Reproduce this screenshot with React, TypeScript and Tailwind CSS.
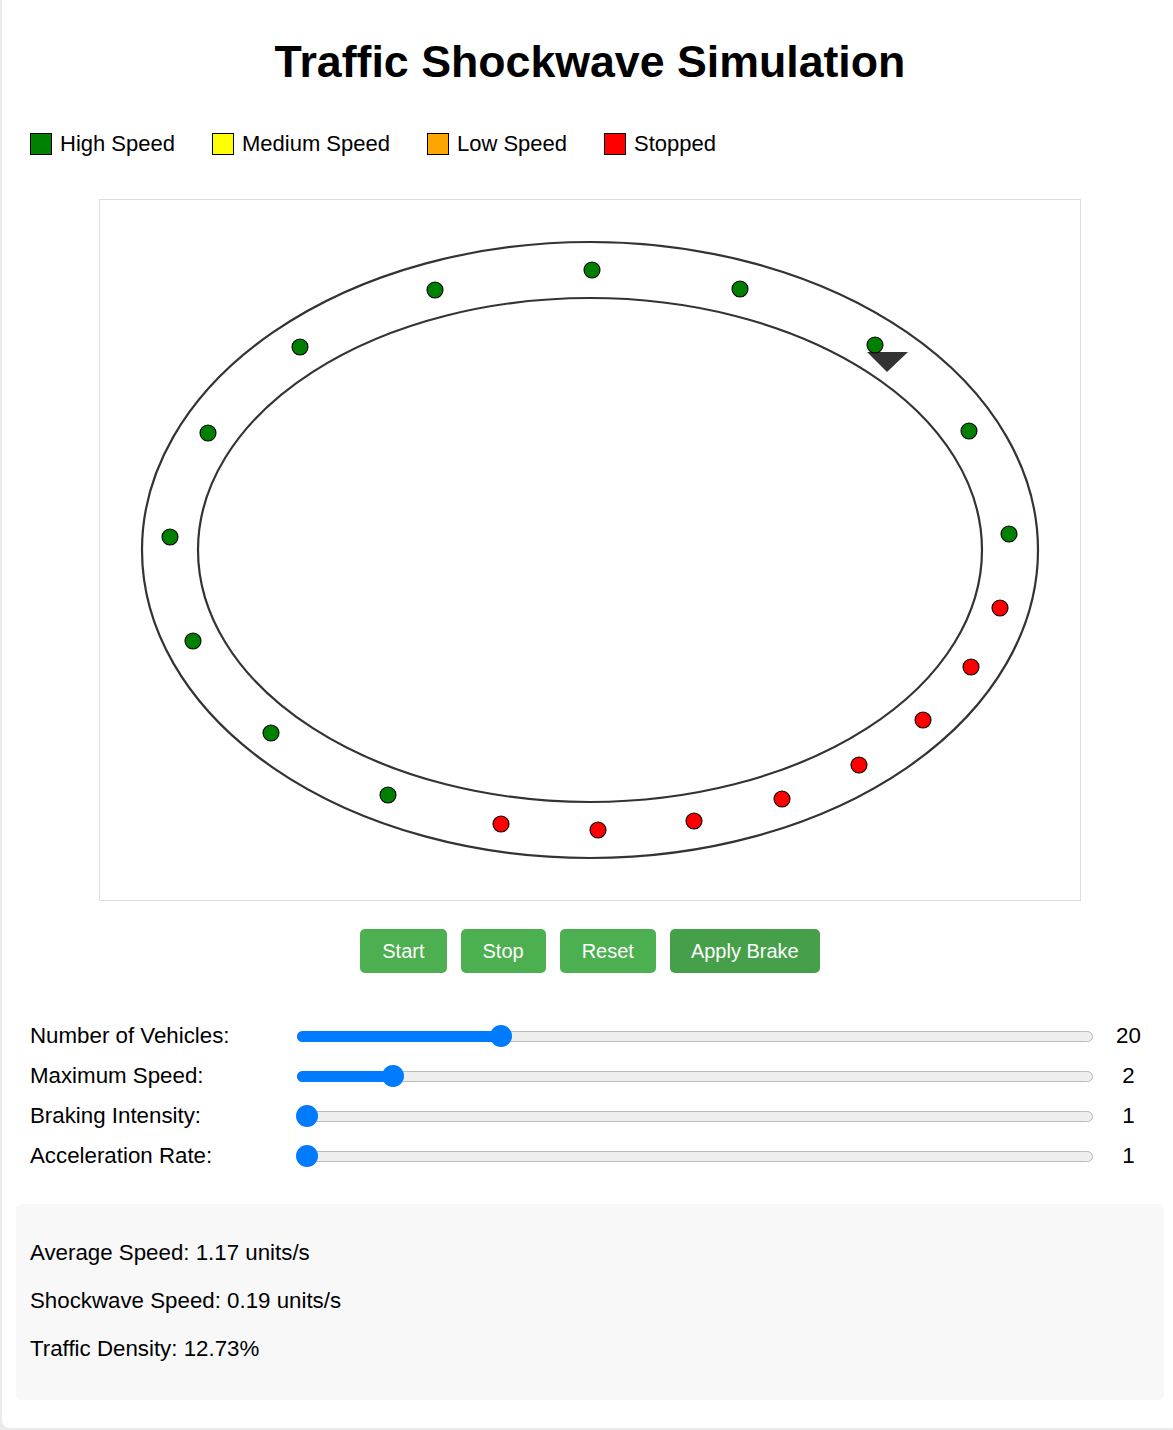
import React from 'react';

type Car = { x: number; y: number; stopped?: boolean };

const cars: Car[] = [
  { x: 492, y: 70 },
  { x: 640, y: 89 },
  { x: 775, y: 145 },
  { x: 869, y: 231 },
  { x: 909, y: 334 },
  { x: 900, y: 408, stopped: true },
  { x: 871, y: 467, stopped: true },
  { x: 823, y: 520, stopped: true },
  { x: 759, y: 565, stopped: true },
  { x: 682, y: 599, stopped: true },
  { x: 594, y: 621, stopped: true },
  { x: 498, y: 630, stopped: true },
  { x: 401, y: 624, stopped: true },
  { x: 288, y: 595 },
  { x: 171, y: 533 },
  { x: 93, y: 441 },
  { x: 70, y: 337 },
  { x: 108, y: 233 },
  { x: 200, y: 147 },
  { x: 335, y: 90 },
];

const legend = [
  { label: 'High Speed', color: 'bg-[#008000]' },
  { label: 'Medium Speed', color: 'bg-[#ffff00]' },
  { label: 'Low Speed', color: 'bg-[#ffa500]' },
  { label: 'Stopped', color: 'bg-[#ff0000]' },
];

const sliders = [
  { label: 'Number of Vehicles:', value: 20, min: 10, max: 50 },
  { label: 'Maximum Speed:', value: 2, min: 1, max: 10 },
  { label: 'Braking Intensity:', value: 1, min: 1, max: 10 },
  { label: 'Acceleration Rate:', value: 1, min: 1, max: 10 },
];

function Slider({ value, min, max }: { value: number; min: number; max: number }) {
  // thumb centre travels from 10px to (width - 10px)
  const pct = (value - min) / (max - min);
  const pos = `calc(10px + ${pct} * (100% - 20px))`;
  return (
    <div className="relative flex-1 h-[22px] flex items-center">
      <div className="w-full h-[11px] rounded-full bg-[#eeeeee] border border-[#bbbbbb]" />
      <div className="absolute left-0 h-[11px] rounded-l-full bg-[#007bff]" style={{ width: pos }} />
      <div
        className="absolute top-0 w-[22px] h-[22px] rounded-full bg-[#007bff] -translate-x-1/2"
        style={{ left: pos }}
      />
    </div>
  );
}

export default function App() {
  return (
    <div className="w-[1173px] h-[1430px] overflow-hidden bg-[#ebebeb] font-['Liberation_Sans',Arial,sans-serif] text-black">
      <div className="ml-[2px] w-[1176px] bg-white rounded-b-[8px] px-[14px] pt-[37px] pb-[28px]">
        <h1 className="text-center text-[44.7px] leading-[50px] font-bold">Traffic Shockwave Simulation</h1>

        {/* Legend */}
        <div className="mt-[46px] flex items-center gap-[37px] pl-[14px] h-[22px]">
          {legend.map((l) => (
            <div key={l.label} className="flex items-center gap-[8px]">
              <div className={`w-[22px] h-[22px] border border-black ${l.color}`} />
              <span className="text-[22px] leading-[22px]">{l.label}</span>
            </div>
          ))}
        </div>

        {/* Track canvas */}
        <div className="mt-[44px] mx-auto w-[982px] h-[702px] border border-[#dddddd]">
          <svg width="980" height="700" viewBox="0 0 980 700">
            <ellipse cx="490" cy="350" rx="448" ry="308" fill="none" stroke="#333" strokeWidth="2.2" />
            <ellipse cx="490" cy="350" rx="392" ry="252" fill="none" stroke="#333" strokeWidth="2.2" />
            <polygon points="767,152 808,152 787,172" fill="#333" />
            {cars.map((c, i) => (
              <circle
                key={i}
                cx={c.x}
                cy={c.y}
                r="8"
                fill={c.stopped ? '#ff0000' : '#008000'}
                stroke="#000"
                strokeWidth="1.1"
              />
            ))}
          </svg>
        </div>

        {/* Buttons */}
        <div className="mt-[28px] flex justify-center gap-[14px]">
          {['Start', 'Stop', 'Reset'].map((b) => (
            <button key={b} className="bg-[#4caf50] text-white text-[20px] leading-[24px] px-[22px] py-[10px] rounded-[5px]">
              {b}
            </button>
          ))}
          <button className="bg-[#45a049] text-white text-[20px] leading-[24px] px-[21px] py-[10px] rounded-[5px]">
            Apply Brake
          </button>
        </div>

        {/* Controls */}
        <div className="mt-[43px] flex flex-col">
          {sliders.map((s) => (
            <div key={s.label} className="flex items-center h-[40px]">
              <span className="w-[281px] pl-[14px] text-[22.3px] leading-[26px]">{s.label}</span>
              <Slider value={s.value} min={s.min} max={s.max} />
              <span className="w-[71px] text-center text-[22.3px] leading-[26px]">{s.value}</span>
            </div>
          ))}
        </div>

        {/* Stats */}
        <div className="mt-[28px] rounded-[5px] bg-[#f8f8f8] px-[14px] pt-[36px] pb-[38px] flex flex-col gap-[22px] text-[22.3px] leading-[26px]">
          <p>Average Speed: 1.17 units/s</p>
          <p>Shockwave Speed: 0.19 units/s</p>
          <p>Traffic Density: 12.73%</p>
        </div>
      </div>
    </div>
  );
}
